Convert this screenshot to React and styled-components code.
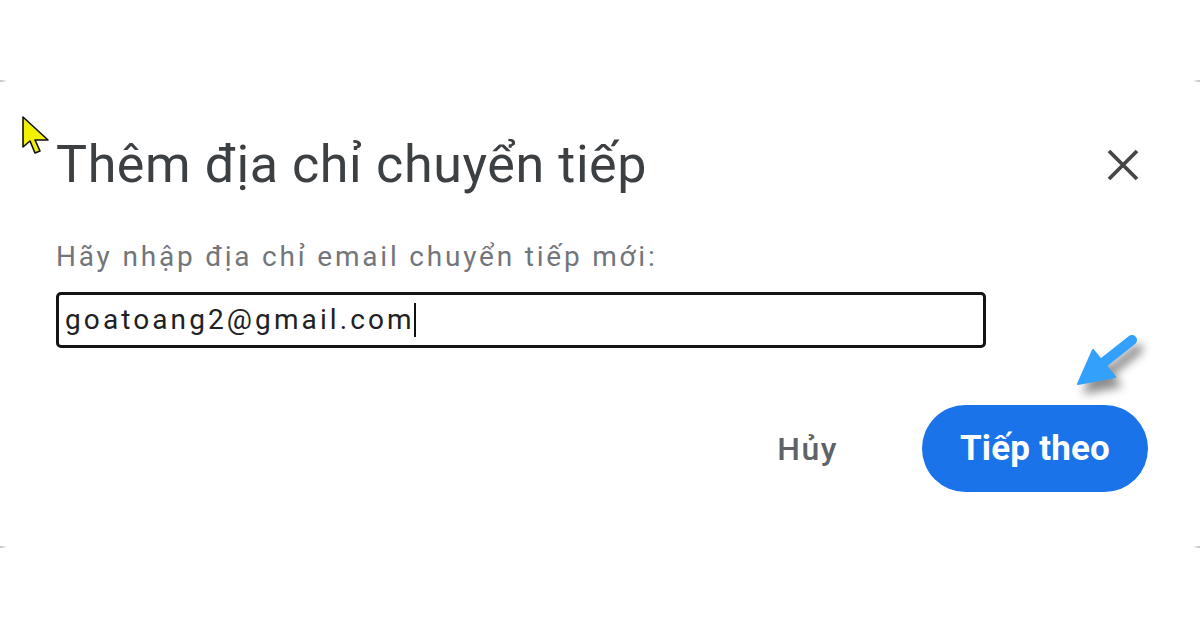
import React from 'react'
import styled, { createGlobalStyle } from 'styled-components'

const GlobalStyle = createGlobalStyle`
  html, body {
    margin: 0;
    padding: 0;
    background: #ffffff;
  }
  body {
    font-family: Roboto, "Noto Sans", "Liberation Sans", sans-serif;
  }
`;

const Page = styled.div`
  position: relative;
  width: 1200px;
  height: 630px;
  padding-top: 81px;
  box-sizing: border-box;
  background: #ffffff;
  overflow: hidden;
  `;
  Page.displayName = 'Page';
const Dialog = styled.div`
  position: relative;
  height: 466px;
  box-sizing: border-box;
  padding: 49px 52px 0 56px;
  display: flex;
  flex-direction: column;
  &::before, &::after {
    content: '';
    position: absolute;
    left: 0;
    right: 0;
    height: 2px;
    background: linear-gradient(to right, #c4c4c4 0, #e6e6e6 5px, transparent 6px, transparent calc(100% - 6px), #e6e6e6 calc(100% - 5px), #c4c4c4 100%);
  }
  &::before { top: -1px; }
  &::after { bottom: -1px; }
  `;
  Dialog.displayName = 'Dialog';
const TitleRow = styled.div`
  height: 70px;
  display: flex;
  flex-direction: row;
  align-items: center;
  justify-content: space-between;
  `;
  TitleRow.displayName = 'TitleRow';
const Title = styled.h1`
  margin: 0;
  font-size: 52px;
  line-height: 70px;
  font-weight: 400;
  letter-spacing: 0.6px;
  color: #3c4043;
  `;
  Title.displayName = 'Title';
const CloseButton = styled.button`
  width: 34px;
  height: 34px;
  margin-right: 8px;
  padding: 0;
  border: 0;
  background: transparent;
  display: flex;
  align-items: center;
  justify-content: center;
  cursor: pointer;
  `;
  CloseButton.displayName = 'CloseButton';
const Label = styled.label`
  margin-top: 42px;
  font-size: 28px;
  line-height: 30px;
  letter-spacing: 2.8px;
  color: #72767a;
  `;
  Label.displayName = 'Label';
const EmailInput = styled.div`
  margin-top: 20px;
  width: 930px;
  height: 56px;
  box-sizing: border-box;
  border: 3px solid #141414;
  border-radius: 5px;
  padding-left: 6px;
  display: flex;
  align-items: center;
  font-size: 28px;
  line-height: 50px;
  letter-spacing: 3.1px;
  color: #202124;
  `;
  EmailInput.displayName = 'EmailInput';
const Caret = styled.span`
  display: inline-block;
  width: 2px;
  height: 34px;
  margin-left: -1px;
  background: #111;
  `;
  Caret.displayName = 'Caret';
const Actions = styled.div`
  margin-top: 57px;
  display: flex;
  flex-direction: row;
  align-items: center;
  justify-content: flex-end;
  gap: 84px;
  `;
  Actions.displayName = 'Actions';
const TextButton = styled.button`
  padding: 0;
  border: 0;
  background: transparent;
  font-family: inherit;
  font-size: 32px;
  font-weight: 500;
  letter-spacing: 1.5px;
  color: #5f6368;
  cursor: pointer;
  `;
  TextButton.displayName = 'TextButton';
const PrimaryButton = styled.button`
  width: 226px;
  height: 87px;
  border: 0;
  border-radius: 44px;
  background: #1a73e8;
  color: #ffffff;
  font-family: inherit;
  font-size: 35px;
  font-weight: 700;
  letter-spacing: 0.2px;
  cursor: pointer;
  `;
  PrimaryButton.displayName = 'PrimaryButton';
const Pointer = styled.svg`
  position: absolute;
  left: 22px;
  top: 116px;
  `;
  Pointer.displayName = 'Pointer';
const HintArrow = styled.svg`
  position: absolute;
  left: 1070px;
  top: 330px;
  overflow: visible;
  filter: drop-shadow(6px 9px 5px rgba(0, 0, 0, 0.45));
  `;
  HintArrow.displayName = 'HintArrow';

export default function App() {
  return (
    <Page>
      <GlobalStyle />
      <Dialog>
        <TitleRow>
          <Title>Thêm địa chỉ chuyển tiếp</Title>
          <CloseButton aria-label='Đóng'>
            <svg width='34' height='34' viewBox='0 0 34 34'>
              <path d='M3 3 L31 31 M31 3 L3 31' stroke='#444746' strokeWidth='3.8' fill='none' />
            </svg>
          </CloseButton>
        </TitleRow>
        <Label>Hãy nhập địa chỉ email chuyển tiếp mới:</Label>
        <EmailInput>
          goatoang2@gmail.com<Caret />
        </EmailInput>
        <Actions>
          <TextButton>Hủy</TextButton>
          <PrimaryButton>Tiếp theo</PrimaryButton>
        </Actions>
      </Dialog>
      <Pointer width='30' height='40' viewBox='0 0 30 40'>
        <path d='M1 1 L1 31 L8 25 L13 37 L18 35 L13 24 L26 24 Z' fill='#f2f200' stroke='#111' strokeWidth='1.6' strokeLinejoin='round' />
      </Pointer>
      <HintArrow width='70' height='60' viewBox='0 0 70 60'>
        <path d='M62 10 L33 33' stroke='#33a1fb' strokeWidth='10' strokeLinecap='round' />
        <path d='M8 54 L23 20 L45 47 Z' fill='#33a1fb' stroke='#33a1fb' strokeWidth='2' strokeLinejoin='round' />
      </HintArrow>
    </Page>
  );
}
